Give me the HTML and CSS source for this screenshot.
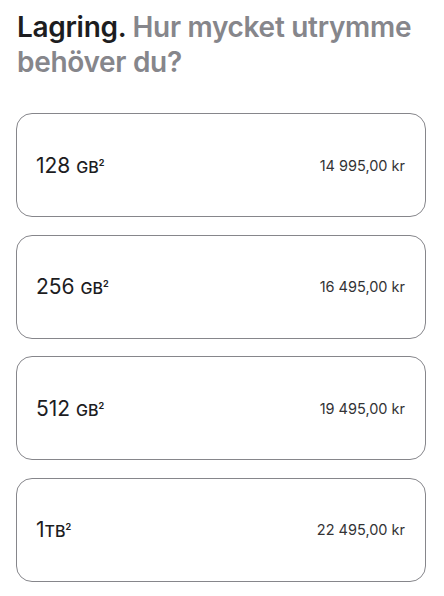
FILE: index.html
```html
<!DOCTYPE html>
<html lang="sv">
<head>
<meta charset="utf-8">
<link rel="stylesheet" href="styles.css">
</head>
<body>
<main class="page">
  <h2 class="title"><span class="title-strong">Lagring.</span> Hur mycket utrymme behöver du?</h2>
  <div class="options">
    <div class="option">
      <span class="cap">128 <span class="unit">GB<sup>2</sup></span></span>
      <span class="price">14 995,00 kr</span>
    </div>
    <div class="option">
      <span class="cap">256 <span class="unit">GB<sup>2</sup></span></span>
      <span class="price">16 495,00 kr</span>
    </div>
    <div class="option">
      <span class="cap">512 <span class="unit">GB<sup>2</sup></span></span>
      <span class="price">19 495,00 kr</span>
    </div>
    <div class="option">
      <span class="cap">1<span class="unit">TB<sup>2</sup></span></span>
      <span class="price">22 495,00 kr</span>
    </div>
  </div>
</main>
</body>
</html>
```

FILE: styles.css
```css
html, body {
  margin: 0;
  padding: 0;
  background: #ffffff;
}
body {
  font-family: Inter, "Noto Sans", "Liberation Sans", sans-serif;
  color: #1d1d1f;
}
.page {
  padding: 10px 18px 0 16px;
}
.title {
  margin: 0 0 33px 1px;
  font-size: 28px;
  line-height: 35px;
  font-weight: 600;
  letter-spacing: -0.3px;
  color: #86868b;
}
.title-strong {
  color: #1d1d1f;
}
.options {
  display: flex;
  flex-direction: column;
  gap: 17.5px;
}
.option {
  height: 104px;
  box-sizing: border-box;
  border: 1px solid #86868b;
  border-radius: 16px;
  padding: 0 20px 0 19px;
  display: flex;
  align-items: center;
  justify-content: space-between;
}
.cap {
  font-size: 21px;
  font-weight: 400;
  color: #1d1d1f;
}
.unit {
  font-size: 16px;
  font-weight: 500;
}
.unit sup {
  font-size: 9px;
  font-weight: 700;
  vertical-align: 7px;
  line-height: 0;
}
.price {
  font-size: 14.5px;
  color: #333336;
}
```
